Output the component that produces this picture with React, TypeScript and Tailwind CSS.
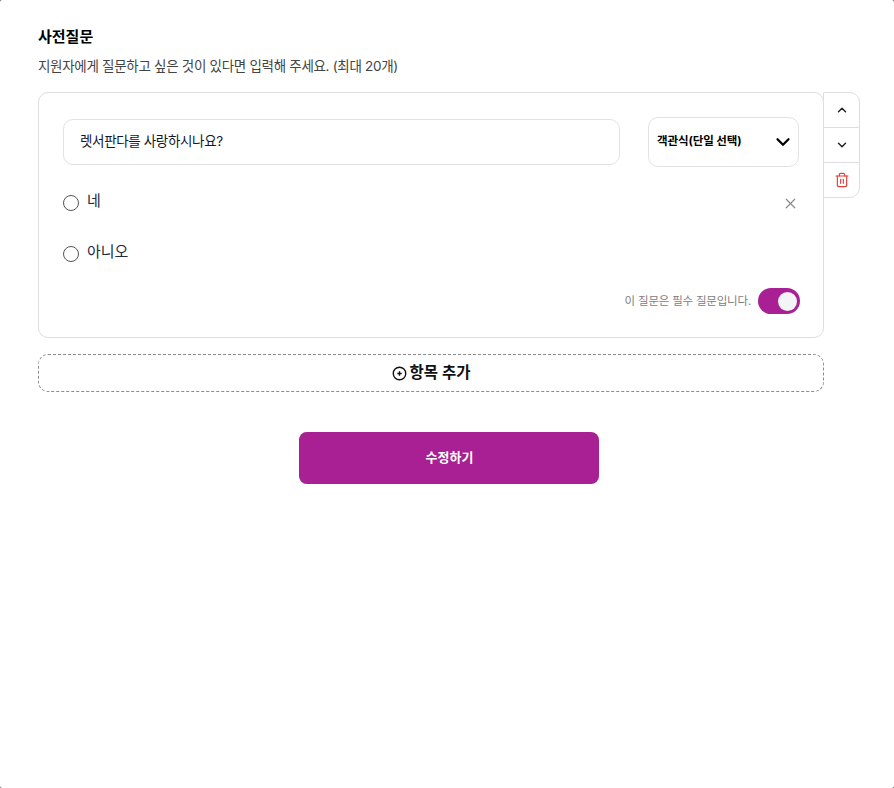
import { ChevronUp, ChevronDown, Trash2, X } from 'lucide-react';

const font = "font-['Inter','Noto_Sans_CJK_KR',sans-serif]";

const Option = ({ label, removable }: { label: string; removable?: boolean }) => (
  <div className="flex h-[24px] items-center">
    <span className="h-4 w-4 shrink-0 rounded-full border border-[#555] bg-white" />
    <span className="mb-[4px] ml-2 text-[15px] leading-6 text-[#1e293b]">{label}</span>
    {removable && <X size={17} strokeWidth={1.75} className="ml-auto mb-[-1px] text-[#8c8c8c]" />}
  </div>
);

const PlusCircle = () => (
  <svg width="15" height="15" viewBox="0 0 15 15" fill="none" stroke="currentColor">
    <circle cx="7.5" cy="7.5" r="6.25" strokeWidth="1.4" />
    <path d="M7.5 5.3v4.4M5.3 7.5h4.4" strokeWidth="1.4" />
  </svg>
);

export default function App() {
  return (
    <div className="h-[788px] w-[894px] bg-[#555]">
      <div className={`${font} h-full rounded-[2px] bg-white pl-[38px] pt-[27px]`}>
        <h2 className="text-[15px] font-bold leading-5 text-black">사전질문</h2>
        <p className="mt-[9px] text-[13.5px] leading-5 tracking-[-0.3px] text-[#444]">
          지원자에게 질문하고 싶은 것이 있다면 입력해 주세요. (최대 20개)
        </p>

        <div className="mt-[16px] flex items-start">
          <div className="h-[246px] w-[786px] rounded-[10px] border border-[#dedede] px-[24px] pt-[24px]">
            <div className="flex items-center">
              <div className="flex h-[46px] w-[557px] items-center rounded-[10px] border border-[#e2e2e2] px-4 pb-[2px] text-[13.5px] tracking-[-0.35px] text-[#0f172a]">
                렛서판다를 사랑하시나요?
              </div>
              <div className="ml-[28px] flex h-[50px] w-[151px] items-center justify-between rounded-[10px] border border-[#e2e2e2] pl-2 pr-[4px] text-[11.5px] font-bold tracking-[-0.1px] text-black">
                객관식(단일 선택)
                <ChevronDown size={22} strokeWidth={2.5} />
              </div>
            </div>
            <div className="mt-[24px] flex flex-col gap-[27px]">
              <Option label="네" removable />
              <Option label="아니오" />
            </div>
            <div className="mt-[22px] flex items-center justify-end">
              <span className="pt-[1px] text-[11.5px] tracking-[-0.2px] text-[#808080]">이 질문은 필수 질문입니다.</span>
              <div className="ml-[7px] mr-[-1px] flex h-[26px] w-[42px] items-center justify-end rounded-full bg-[#a82093] pr-[3px]">
                <span className="h-[19px] w-[19px] rounded-full bg-[#f3f4f6]" />
              </div>
            </div>
          </div>

          <div className="ml-[-1px] flex w-[37px] flex-col rounded-r-[10px] border border-[#dedede] text-[#222]">
            <div className="flex h-[35px] items-center justify-center border-b border-[#dedede]">
              <ChevronUp size={14} strokeWidth={2.5} />
            </div>
            <div className="flex h-[35px] items-center justify-center border-b border-[#dedede]">
              <ChevronDown size={14} strokeWidth={2.5} />
            </div>
            <div className="flex h-[34px] items-center justify-center">
              <Trash2 size={16} strokeWidth={1.75} className="text-[#e0403a]" />
            </div>
          </div>
        </div>

        <div className="mt-[16px] flex h-[38px] w-[786px] items-center justify-center gap-[3px] rounded-[10px] border border-dashed border-[#8c8c8c] text-[15.5px] font-semibold text-[#111]">
          <PlusCircle />
          <span className="mb-[1px]">항목 추가</span>
        </div>

        <div className="ml-[261px] mt-[40px] flex h-[52px] w-[300px] items-center justify-center rounded-[8px] border-l border-l-[#7d3a74] bg-[#a82093] text-[13px] font-semibold text-white">
          수정하기
        </div>
      </div>
    </div>
  );
}
